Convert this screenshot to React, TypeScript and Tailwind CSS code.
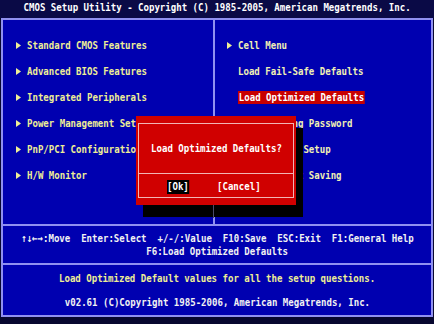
const YELLOW = "#eeee96";

function Txt({ children, center = false, className = "" }: { children: React.ReactNode; center?: boolean; className?: string }) {
  return (
    <span
      className={`inline-block whitespace-pre font-bold text-[11px] leading-[13px] scale-x-[0.823] ${center ? "origin-center" : "origin-left"} ${className}`}
    >
      {children}
    </span>
  );
}

function Arrow() {
  return (
    <svg width="5" height="7" viewBox="0 0 5 7" className="shrink-0">
      <polygon points="0,0 5,3.5 0,7" fill={YELLOW} />
    </svg>
  );
}

const leftItems = [
  "Standard CMOS Features",
  "Advanced BIOS Features",
  "Integrated Peripherals",
  "Power Management Setup",
  "PnP/PCI Configurations",
  "H/W Monitor",
];

const rightItems = [
  { label: "Cell Menu", arrow: true },
  { label: "Load Fail-Safe Defaults" },
  { label: "Load Optimized Defaults", active: true },
  { label: "BIOS Setting Password" },
  { label: "Save & Exit Setup" },
  { label: "Exit Without Saving" },
];

export default function App() {
  return (
    <div className="w-[434px] h-[324px] overflow-hidden bg-[#07072f] font-['DejaVu_Sans_Mono','Liberation_Mono',monospace] flex flex-col">
      {/* title bar */}
      <div className="h-[18px] shrink-0 bg-[#0a0a46] flex justify-center items-start pt-[1px] text-white">
        <Txt center>CMOS Setup Utility - Copyright (C) 1985-2005, American Megatrends, Inc.</Txt>
      </div>

      <div className="relative ml-[1px] w-[432px] h-[299px] shrink-0 border-2 border-[#9090f0] bg-[#0000b0] flex flex-col">
        {/* menus */}
        <div className="h-[204px] flex">
          <div className="w-[210px] pt-[12px] pl-[13px]">
            {leftItems.map((item) => (
              <div key={item} className="h-[26px] flex items-center gap-[6px] text-[#eeee96]">
                <Arrow />
                <Txt>{item}</Txt>
              </div>
            ))}
          </div>
          <div className="w-[2px] bg-[#9090f0]" />
          <div className="flex-1 pt-[12px] pl-[12px]">
            {rightItems.map((item) => (
              <div key={item.label} className="h-[26px] flex items-center gap-[6px] text-[#f0f0b4]">
                {item.arrow ? <Arrow /> : <div className="w-[5px] shrink-0" />}
                {item.active ? (
                  <Txt className="bg-[#c80000] text-white px-[1px]">{item.label}</Txt>
                ) : (
                  <Txt>{item.label}</Txt>
                )}
              </div>
            ))}
          </div>
        </div>

        <div className="h-[2px] bg-[#9090f0]" />

        {/* key help */}
        <div className="h-[37px] flex flex-col items-center justify-center text-[#f2f2f2]">
          <Txt center className="leading-[12px]">↑↓←→:Move  Enter:Select  +/-/:Value  F10:Save  ESC:Exit  F1:General Help</Txt>
          <Txt center className="leading-[12px]">F6:Load Optimized Defaults</Txt>
        </div>

        <div className="h-[2px] bg-[#9090f0]" />

        {/* status */}
        <div className="h-[50px] flex flex-col items-center justify-center gap-[11px]">
          <Txt center className="text-[#eeee96]">Load Optimized Default values for all the setup questions.</Txt>
          <Txt center className="text-[#f2f2f2]">v02.61 (C)Copyright 1985-2006, American Megatrends, Inc.</Txt>
        </div>

        {/* confirm dialog */}
        <div className="absolute left-[133px] top-[96px] w-[160px] h-[89px] bg-[#d00000] shadow-[7px_12px_0_#000] px-[2px] py-[7px]">
          <div className="h-full border border-[#f2b4b4] flex flex-col text-white">
            <div className="h-[49px] flex items-center justify-center">
              <Txt center>Load Optimized Defaults?</Txt>
            </div>
            <div className="h-[1px] bg-[#f2b4b4]" />
            <div className="flex-1 flex items-center pl-[28px] pt-[2px]">
              <Txt className="bg-black leading-[14px]">[Ok]</Txt>
              <Txt className="ml-[23px]">[Cancel]</Txt>
            </div>
          </div>
        </div>
        {/* divider dimmed under the shadow */}
        <div className="absolute left-[210px] top-[185px] w-[1px] h-[13px] bg-[#4a4a6a]" />
      </div>
    </div>
  );
}
